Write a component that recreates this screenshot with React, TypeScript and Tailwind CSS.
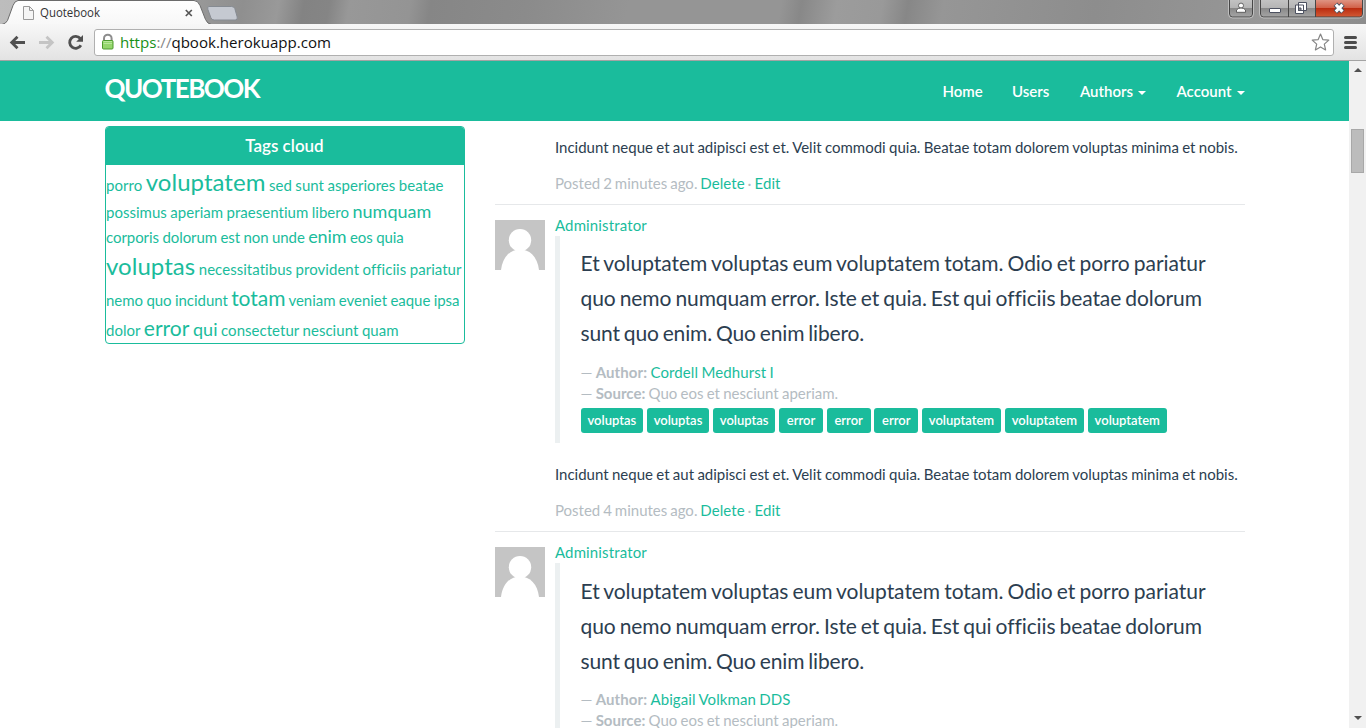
import type { ReactNode } from "react";

function Link({ children, className = "" }: { children: ReactNode; className?: string }) {
  return <a className={`text-[#1abc9c] ${className}`}>{children}</a>;
}

function TabStrip() {
  return (
    <div className="flex h-6 shrink-0 justify-between bg-[linear-gradient(100deg,#bdbdbd_0,#bbb_30px,#8f8f8f_240px,#999_275px,#838383_300px,#858585_325px,#989898_345px,#949494_405px,#868686_425px,#8b8b8b_520px,#959595_620px,#959595_770px,#888_790px,#9c9c9c_825px,#999_870px,#878787_895px,#969696_930px,#8d8d8d_1080px,#979797_1250px,#8b8b8b_1366px)]">
      <svg width="250" height="25" viewBox="0 0 250 25" className="shrink-0 overflow-visible">
        <defs>
          <linearGradient id="tab" x1="0" y1="0" x2="0" y2="1">
            <stop offset="0" stopColor="#fff" />
            <stop offset="1" stopColor="#f7f7f7" />
          </linearGradient>
        </defs>
        <path d="M0 24.500h2q4-1 5.500-4L13 5.500Q14.500 1 18 .5H194q4 0 6 5l5.500 14q2 4.500 6 5V26H0z" fill="url(#tab)" stroke="#6c6c6c" />
        <path d="M0 25h250v2H0z" fill="#f7f7f7" />
        <path d="M209 24.500h41" stroke="#666" />
        <path d="M209 6.500h22.500q2.500 0 3.300 2l2.400 8.500q.8 3-2 3h-21q-2.500 0-3.300-2.200l-3-8.300q-1-3 1.100-3z" fill="#c5c9d1" stroke="#868b92" />
        <path d="M23.500 6.500h6l4 4v9h-10z" fill="#f5f5f5" stroke="#9a9a9a" />
        <path d="M29.500 6.500v4h4" fill="none" stroke="#9a9a9a" />
        <text x="40" y="17" fontSize="12" fill="#333" fontFamily="Open Sans, Noto Sans, sans-serif" textLength="60" lengthAdjust="spacingAndGlyphs">Quotebook</text>
        <path d="M185.800 10l6 6M191.800 10l-6 6" stroke="#555" strokeWidth="1.700" />
      </svg>
      <div className="flex">
        <svg width="150" height="24" viewBox="0 0 150 24" className="shrink-0">
          <defs>
            <linearGradient id="btn" x1="0" y1="0" x2="0" y2="1">
              <stop offset="0" stopColor="#c4c4c4" />
              <stop offset=".48" stopColor="#b5b5b5" />
              <stop offset=".52" stopColor="#898989" />
              <stop offset="1" stopColor="#a5a5a5" />
            </linearGradient>
            <linearGradient id="close" x1="0" y1="0" x2="0" y2="1">
              <stop offset="0" stopColor="#e09a8a" />
              <stop offset=".48" stopColor="#d2624a" />
              <stop offset=".52" stopColor="#bb2c10" />
              <stop offset="1" stopColor="#d25a35" />
            </linearGradient>
          </defs>
          <path d="M13.500-1V14q0 3 3 3h17q3 0 3-3V-1z" fill="url(#btn)" stroke="#474747" />
          <path d="M12.500 0v14q0 4 4 4h17q4 0 4-4V0" fill="none" stroke="#c8c8c8" strokeOpacity=".8" />
          <path d="M44.500-1V14q0 3 3 3H73V-1z" fill="url(#btn)" />
          <path d="M73-1h27v18H73z" fill="url(#btn)" />
          <path d="M100-1h46.500V14q0 3-3 3H100z" fill="url(#close)" />
          <path d="M44.500-1V14q0 3 3 3h96q3 0 3-3V-1M72.500 0v17M99.500 0v17" fill="none" stroke="#474747" />
          <path d="M43.500 0v14q0 4 4 4h96q4 0 4-4V0" fill="none" stroke="#c8c8c8" strokeOpacity=".8" />
          <g fill="#fff" stroke="#555" strokeWidth=".9">
            <circle cx="25" cy="5.600" r="2.500" />
            <path d="M20.500 12.300V10q1.500-2 4.500-2t4.500 2v2.300z" />
          </g>
          <rect x="53.500" y="8.500" width="11" height="4" rx=".5" fill="#fff" stroke="#4c5160" />
          <path d="M82.500 2.500h8v8h-8zM79.500 5h8v8.500h-8z" fill="#fff" stroke="#4c5160" />
          <path d="M82.500 8h2.500v2.500h-2.500z" fill="#888" stroke="#4c5160" />
          <g fill="none">
            <path d="M119.400 4.200l7.500 7.800M126.900 4.200l-7.500 7.800" stroke="#4c5160" strokeWidth="5" />
            <path d="M119.800 4.600l6.700 7M126.500 4.600l-6.700 7" stroke="#fff" strokeWidth="3" />
          </g>
        </svg>
      </div>
    </div>
  );
}

function Toolbar() {
  return (
    <div className="flex h-[37px] shrink-0 items-center border-b border-[#a3a3a3] bg-linear-to-b from-[#f7f7f7] to-[#e3e3e3]">
      <svg width="94" height="36" viewBox="0 0 94 36" className="shrink-0">
        <path d="M25 18.500H11.500M17.500 12.700l-5.800 5.800 5.800 5.800" fill="none" stroke="#505050" strokeWidth="2.800" />
        <path d="M39 18.500h13.500M46.500 12.700l5.800 5.800-5.800 5.800" fill="none" stroke="#c4c4c4" strokeWidth="2.800" />
        <path d="M80.300 14.500a6 6 0 1 0 .6 6.800" fill="none" stroke="#505050" strokeWidth="2.800" />
        <path d="M83 11v6.800h-6.800z" fill="#505050" />
      </svg>
      <div className="flex h-[27px] w-[1240px] items-center rounded-[3px] border border-[#b0b0b0] bg-white pl-1.5">
        <svg width="14" height="18" viewBox="0 0 14 18">
          <path d="M3 8V5.500a3.800 3.800 0 0 1 7.600 0V8" fill="none" stroke="#8d8d8d" strokeWidth="2" />
          <rect x="1.500" y="7.500" width="10.500" height="8.500" rx="1" fill="#94d66c" stroke="#4c9b2c" />
          <path d="M2.500 8.500H11M2.500 10.500H11" stroke="#b7e69b" />
        </svg>
        <svg width="220" height="24" className="ml-[5px]">
          <text x="0" y="18" fontSize="15" fontFamily="Open Sans, Noto Sans, sans-serif" textLength="211" lengthAdjust="spacingAndGlyphs" fill="#111">
            <tspan fill="#189018">https</tspan><tspan fill="#888">://</tspan>qbook.herokuapp.com
          </text>
        </svg>
        <svg width="20" height="20" viewBox="0 0 20 20" className="mr-[3px] ml-auto">
          <path d="M10.500 2l2.300 5.600 6 .5-4.500 4 1.300 5.800-5.100-3-5.100 3 1.300-5.800-4.500-4 6-.5z" fill="#fff" stroke="#858585" strokeWidth="1.200" strokeLinejoin="round" />
        </svg>
      </div>
      <svg width="32" height="36" viewBox="0 0 32 36">
        <path d="M11.500 13.500h10M11.500 18.500h10M11.500 23.500h10" stroke="#4c4c4c" strokeWidth="3" strokeLinecap="round" />
      </svg>
    </div>
  );
}

function Caret() {
  return <span className="ml-[5px] inline-block border-x-4 border-t-4 border-x-transparent border-t-white align-middle" />;
}

function Navbar() {
  return (
    <nav className="flex h-[60px] shrink-0 bg-[#1abc9c] pr-[104px] pl-[104.5px] text-white">
      <div className="mt-[11px] h-8 w-[157px] text-[26px] leading-8 font-bold tracking-[-1.5px]">QUOTEBOOK</div>
      <ul className="ml-auto flex pt-5 text-[15px] leading-[21px] font-semibold">
        <li className="w-[69.500px]">Home</li>
        <li className="w-[68px]">Users</li>
        <li className="w-[96.500px]">Authors<Caret /></li>
        <li className="w-[68.500px] whitespace-nowrap">Account<Caret /></li>
      </ul>
    </nav>
  );
}

type Tag = [string, string?];

const tagRows: { style: string; tags: Tag[] }[] = [
  { style: "h-[31px] leading-[34px] tracking-[0.04px]", tags: [["porro"], ["voluptatem", "text-2xl"], ["sed"], ["sunt"], ["asperiores"], ["beatae"]] },
  { style: "h-[25px] leading-[26px] tracking-[0.02px]", tags: [["possimus"], ["aperiam"], ["praesentium"], ["libero"], ["numquam", "text-lg"]] },
  { style: "h-[28px] leading-[26px] tracking-[-0.06px]", tags: [["corporis"], ["dolorum"], ["est"], ["non"], ["unde"], ["enim", "text-lg"], ["eos"], ["quia"]] },
  { style: "h-[33px] leading-[34px] tracking-[0.04px]", tags: [["voluptas", "text-2xl"], ["necessitatibus"], ["provident"], ["officiis"], ["pariatur"]] },
  { style: "h-[30px] leading-[30px] tracking-[-0.04px]", tags: [["nemo"], ["quo"], ["incidunt"], ["totam", "text-[21px]"], ["veniam"], ["eveniet"], ["eaque"], ["ipsa"]] },
  { style: "h-[28px] leading-[30px] tracking-[0.04px]", tags: [["dolor"], ["error", "text-[21px]"], ["qui", "text-lg"], ["consectetur"], ["nesciunt"], ["quam"]] },
];

function TagCloud() {
  return (
    <section className="h-[218px] w-[360px] shrink-0 overflow-hidden rounded-[4px] border border-[#1abc9c]">
      <h3 className="mb-px h-[38px] bg-[#1abc9c] pr-px text-center text-[17px] leading-[38px] font-semibold text-white">Tags cloud</h3>
      {tagRows.map((row, i) => (
        <div key={i} className={`text-[15px] [word-spacing:-0.4px] whitespace-nowrap ${row.style}`}>
          {row.tags.map(([word, size]) => (
            <span key={word}><Link className={size ?? "text-[15px]"}>{word}</Link> </span>
          ))}
        </div>
      ))}
    </section>
  );
}

function Meta({ posted }: { posted: string }) {
  return (
    <div className="ml-[60px] text-[15px] leading-[21px]">
      <p className="[word-spacing:-0.5px] whitespace-nowrap">Incidunt neque et aut adipisci est et. Velit commodi quia. Beatae totam dolorem voluptas minima et nobis.</p>
      <p className="mt-[15px] [word-spacing:-0.9px] text-[#b4bcc2]">Posted {posted} ago. <Link className="tracking-[0.07px]">Delete</Link> · <Link className="tracking-[0.1px]">Edit</Link></p>
    </div>
  );
}

const labels: [string, string][] = [
  ["voluptas", "w-[62.600px]"],
  ["voluptas", "w-[62.600px]"],
  ["voluptas", "w-[62.600px]"],
  ["error", "w-[44px]"],
  ["error", "w-[44px]"],
  ["error", "w-[44px]"],
  ["voluptatem", "w-[79.300px]"],
  ["voluptatem", "w-[79.300px]"],
  ["voluptatem", "w-[79.300px]"],
];

function Quote({ author, tagged = false }: { author: string; tagged?: boolean }) {
  return (
    <article className="flex gap-2.5 border-t border-[#e6e8ea] pt-2.5">
      <svg width="50" height="50" viewBox="0 0 50 50" className="mt-[5px] shrink-0">
        <path d="M0 0h50v50H0z" fill="#c5c5c5" />
        <circle cx="25" cy="20.200" r="11.200" fill="#fff" />
        <path d="M6 50C7.500 37 15 29.500 25 29.500S42.500 37 44 50z" fill="#fff" />
      </svg>
      <div className="w-[690px]">
        <div className="text-[15px] leading-[21px] tracking-[0.13px]"><Link>Administrator</Link></div>
        <blockquote className={`h-[207px] border-l-[5px] border-[#ecf0f1] pl-[20.500px] ${tagged ? "pt-[9px]" : "pt-2.5"}`}>
          <div className="h-[105px] text-[21px] leading-[35px] [word-spacing:-1.2px] whitespace-nowrap">
            <p className="tracking-[-0.04px]">Et voluptatem voluptas eum voluptatem totam. Odio et porro pariatur</p>
            <p className="tracking-[-0.09px]">quo nemo numquam error. Iste et quia. Est qui officiis beatae dolorum</p>
            <p className="tracking-[-0.16px]">sunt quo enim. Quo enim libero.</p>
          </div>
          <div className={`text-[15px] leading-[21px] [word-spacing:-0.6px] text-[#b4bcc2] ${tagged ? "mt-3" : "mt-[11px]"}`}>
            <p>— <b className="tracking-[0.1px]">Author:</b> <Link className="tracking-[0.1px]">{author}</Link></p>
            <p>— <b>Source:</b> Quo eos et nesciunt aperiam.</p>
          </div>
          {tagged && (
            <div className="mt-1 flex gap-[3.600px]">
              {labels.map(([label, width], i) => (
                <span key={i} className={`h-[25px] rounded-[3px] bg-[#1abc9c] text-center text-[13px] leading-[25px] font-semibold text-white ${width}`}>{label}</span>
              ))}
            </div>
          )}
        </blockquote>
      </div>
    </article>
  );
}

function Scrollbar() {
  return (
    <div className="flex w-[17px] shrink-0 flex-col items-center justify-between bg-[#f1f1f1] pt-[7px] pb-2">
      <div className="flex flex-col items-center gap-[57px]">
        <span className="h-1 w-0 border-x-4 border-b-4 border-x-transparent border-b-[#505050]" />
        <span className="h-11 w-[13px] border border-[#a8a8a8] bg-[#bcbcbc]" />
      </div>
      <span className="h-1 w-0 border-x-4 border-t-4 border-x-transparent border-t-[#505050]" />
    </div>
  );
}

export default function App() {
  return (
    <div className="flex h-[728px] w-[1366px] flex-col overflow-hidden bg-white font-['Lato',sans-serif] text-[#2c3e50] [font-variant-ligatures:none]">
      <TabStrip />
      <Toolbar />
      <div className="flex min-h-0 flex-1">
        <div className="flex min-w-0 flex-1 flex-col overflow-hidden">
          <Navbar />
          <main className="flex gap-[30px] pl-[105px]">
            <div className="pt-[5px]"><TagCloud /></div>
            <div className="w-[750px] pt-4">
              <Meta posted="2 minutes" />
              <div className="h-2.5" />
              <Quote author="Cordell Medhurst I" tagged />
              <div className="h-[21px]" />
              <Meta posted="4 minutes" />
              <div className="h-2.5" />
              <Quote author="Abigail Volkman DDS" />
            </div>
          </main>
        </div>
        <Scrollbar />
      </div>
    </div>
  );
}
